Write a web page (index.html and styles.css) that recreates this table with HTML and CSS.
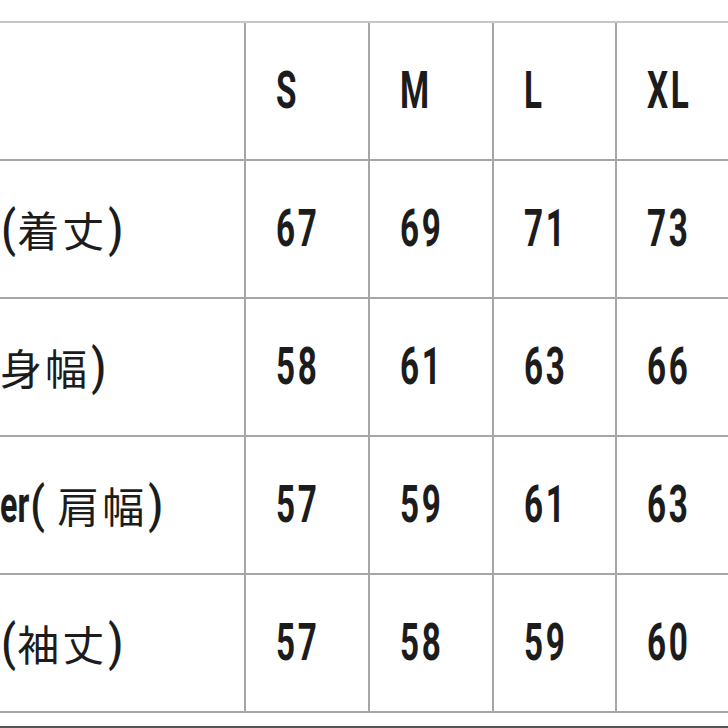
FILE: index.html
```html
<!DOCTYPE html>
<html lang="ja">
<head>
<meta charset="utf-8">
<title>Size chart</title>
<link rel="stylesheet" href="styles.css">
</head>
<body>
<div class="chart">
  <div class="cell label"></div>
  <div class="cell"><span class="num">S</span></div>
  <div class="cell"><span class="num">M</span></div>
  <div class="cell"><span class="num">L</span></div>
  <div class="cell"><span class="num">XL</span></div>

  <div class="cell label"><span class="lab r1"><span class="par">(</span><span class="cjk">着丈</span><span class="par">)</span></span></div>
  <div class="cell"><span class="num">67</span></div>
  <div class="cell"><span class="num">69</span></div>
  <div class="cell"><span class="num">71</span></div>
  <div class="cell"><span class="num">73</span></div>

  <div class="cell label"><span class="lab r2"><span class="cjk">身幅</span><span class="par">)</span></span></div>
  <div class="cell"><span class="num">58</span></div>
  <div class="cell"><span class="num">61</span></div>
  <div class="cell"><span class="num">63</span></div>
  <div class="cell"><span class="num">66</span></div>

  <div class="cell label"><span class="lab r3"><span class="lat"><span class="num tight">er</span></span><span class="par open">(</span><span class="cjk">肩幅</span><span class="par">)</span></span></div>
  <div class="cell"><span class="num">57</span></div>
  <div class="cell"><span class="num">59</span></div>
  <div class="cell"><span class="num">61</span></div>
  <div class="cell"><span class="num">63</span></div>

  <div class="cell label"><span class="lab r4"><span class="par">(</span><span class="cjk">袖丈</span><span class="par">)</span></span></div>
  <div class="cell"><span class="num">57</span></div>
  <div class="cell"><span class="num">58</span></div>
  <div class="cell"><span class="num">59</span></div>
  <div class="cell"><span class="num">60</span></div>
</div>
<div class="foot"></div>
</body>
</html>
```

FILE: styles.css
```css
html, body {
  margin: 0;
  padding: 0;
  background: #ffffff;
  overflow: hidden;
}
body {
  width: 728px;
  height: 728px;
  font-family: Roboto, "Noto Sans CJK JP", sans-serif;
  color: #1c1c1c;
}
.chart {
  margin-top: 21px;
  border-top: 2px solid #c6c6c6;
  display: grid;
  grid-template-columns: 246px 124px 124px 123px 140px;
  grid-auto-rows: 138px;
  width: 757px;
}
.cell {
  border-right: 2px solid #a6a6a6;
  border-bottom: 2px solid #a6a6a6;
  display: flex;
  align-items: center;
  padding-left: 30px;
  overflow: hidden;
  white-space: nowrap;
}
.cell.label {
  padding-left: 0;
}
.num {
  display: inline-block;
  font-family: Roboto, sans-serif;
  font-weight: 700;
  font-size: 52px;
  line-height: 1;
  letter-spacing: 4px;
  transform: scaleX(0.64);
  transform-origin: left center;
}
.num.tight {
  letter-spacing: 0;
  transform: scaleX(0.62);
}
.lab {
  display: flex;
  align-items: center;
}
.par {
  font-family: Roboto, sans-serif;
  font-weight: 500;
  font-size: 50px;
  line-height: 1;
  transform: scaleX(0.85);
}
.cjk {
  font-family: "Noto Sans CJK JP", sans-serif;
  font-weight: 400;
  font-size: 42px;
  line-height: 1;
  letter-spacing: 3px;
}
.lat {
  display: inline-block;
  width: 29px;
}
.r3 .open { margin-right: 11px; }
.foot {
  height: 13px;
  border-bottom: 3px solid #555555;
}
```
